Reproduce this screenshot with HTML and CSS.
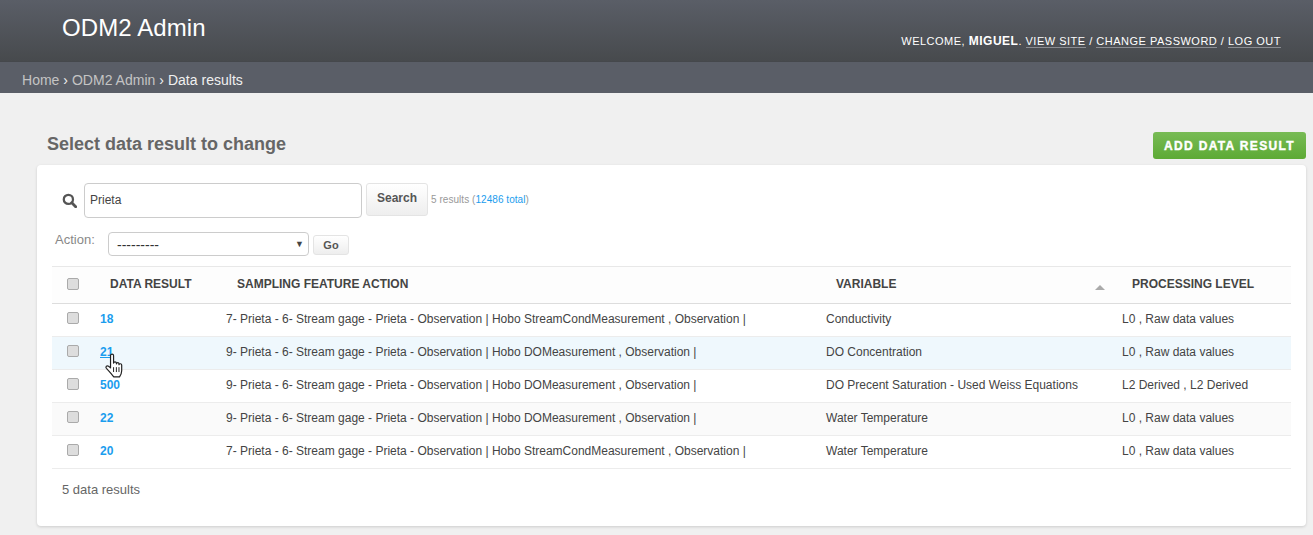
FILE: index.html
```html
<!DOCTYPE html>
<html lang="en">
<head>
  <meta charset="UTF-8">
  <title>Select data result to change</title>
  <link rel="stylesheet" href="styles.css">
</head>
<body>
  <header class="topbar">
    <div class="brand">ODM2 Admin</div>
    <div class="usertools">Welcome, <strong>Miguel</strong>. <a href="#">View site</a> / <a href="#">Change password</a> / <a href="#">Log out</a></div>
  </header>
  <nav class="crumbs"><a href="#">Home</a> › <a href="#">ODM2 Admin</a> › Data results</nav>

  <main class="content">
    <div class="title-row">
      <h1>Select data result to change</h1>
      <a class="add-btn" href="#">Add data result</a>
    </div>

    <section class="card">
      <form class="search-row">
        <svg class="search-icon" viewBox="0 0 16 16" width="15" height="15"><circle cx="6.8" cy="6.8" r="4.9" fill="none" stroke="#555" stroke-width="2.4"/><path d="M10.4 10.4 14.6 14.6" stroke="#555" stroke-width="3" stroke-linecap="round"/></svg>
        <input class="search-input" type="text" value="Prieta">
        <button class="search-btn" type="button">Search</button>
        <span class="count">5 results (<a href="#">12486 total</a>)</span>
      </form>

      <div class="action-row">
        <span class="action-label">Action:</span>
        <div class="select-box">---------<span class="select-arrow">▼</span></div>
        <button class="go-btn" type="button">Go</button>
      </div>

      <div class="table-wrap">
        <table class="results">
          <colgroup>
            <col class="col-check"><col class="col-id"><col class="col-action"><col class="col-var"><col class="col-level">
          </colgroup>
          <thead>
            <tr>
              <th class="check"><span class="box"></span></th>
              <th>Data result</th>
              <th class="th-action">Sampling feature action</th>
              <th class="sorted">Variable<span class="sort-arrow"></span></th>
              <th>Processing level</th>
            </tr>
          </thead>
          <tbody>
            <tr>
              <td class="check"><span class="box"></span></td>
              <td><a class="id" href="#">18</a></td>
              <td>7- Prieta - 6- Stream gage - Prieta - Observation | Hobo StreamCondMeasurement , Observation |</td>
              <td>Conductivity</td>
              <td>L0 , Raw data values</td>
            </tr>
            <tr class="hovered">
              <td class="check"><span class="box"></span></td>
              <td class="id-cell"><a class="id under" href="#">21</a>
                <svg class="hand" viewBox="0 0 18 24" width="20" height="26"><path d="M5.800 3.200c0-1.700 2.800-1.700 2.800 0v7c.2-1.500 2.500-1.500 2.600 0v.7c.2-1.400 2.300-1.400 2.400 0v.8c.2-1.200 2.400-1.100 2.500.3v5.200c0 2.500-1 4.200-2 5.800H8.800c-1.400-2-3.400-4.200-6.800-7.900-1.300-1.500.5-3 2-2l1.800 1.600z" fill="#fff" stroke="#222" stroke-width="1.100" stroke-linejoin="round"/><path d="M8.600 14v4.500M11.200 14v4.500M13.600 14v4.500" stroke="#222" stroke-width=".9"/></svg>
              </td>
              <td>9- Prieta - 6- Stream gage - Prieta - Observation | Hobo DOMeasurement , Observation |</td>
              <td>DO Concentration</td>
              <td>L0 , Raw data values</td>
            </tr>
            <tr>
              <td class="check"><span class="box"></span></td>
              <td><a class="id" href="#">500</a></td>
              <td>9- Prieta - 6- Stream gage - Prieta - Observation | Hobo DOMeasurement , Observation |</td>
              <td>DO Precent Saturation - Used Weiss Equations</td>
              <td>L2 Derived , L2 Derived</td>
            </tr>
            <tr class="alt">
              <td class="check"><span class="box"></span></td>
              <td><a class="id" href="#">22</a></td>
              <td>9- Prieta - 6- Stream gage - Prieta - Observation | Hobo DOMeasurement , Observation |</td>
              <td>Water Temperature</td>
              <td>L0 , Raw data values</td>
            </tr>
            <tr>
              <td class="check"><span class="box"></span></td>
              <td><a class="id" href="#">20</a></td>
              <td>7- Prieta - 6- Stream gage - Prieta - Observation | Hobo StreamCondMeasurement , Observation |</td>
              <td>Water Temperature</td>
              <td>L0 , Raw data values</td>
            </tr>
          </tbody>
        </table>
      </div>

      <p class="paginator">5 data results</p>
    </section>
  </main>
</body>
</html>
```

FILE: styles.css
```css
* { box-sizing: border-box; }
html, body { height: 100%; }
body { margin: 0; background: #f0f0f0; color: #444; font-family: "Liberation Sans", Arial, sans-serif; font-size: 12px; overflow: hidden; }
a { color: #1b9dee; text-decoration: none; }

.topbar { height: 62px; padding: 14px 32px 0 62px; display: flex; justify-content: space-between; background: linear-gradient(#5a5e67, #474a4d); border-bottom: 1px solid #45484c; }
.brand { color: #fff; font-size: 24px; line-height: 28px; letter-spacing: 0.1px; }
.usertools { margin-top: 20px; color: #fff; font-size: 11px; line-height: 14px; letter-spacing: 0.5px; text-transform: uppercase; }
.usertools strong { font-size: 12px; }
.usertools a { color: #fff; border-bottom: 1px solid #8a8d92; }

.crumbs { height: 31px; padding: 10px 22px 0; background: #5a5e67; color: #f0f0f0; font-size: 14px; line-height: 16px; letter-spacing: 0.02px; }
.crumbs a { color: #c4c4c4; }

.content { padding: 39px 7px 0 37px; }
.title-row { height: 33px; display: flex; justify-content: space-between; align-items: flex-start; }
.title-row h1 { margin: 1px 0 0 10px; color: #666; font-size: 18px; line-height: 22px; font-weight: bold; }
.add-btn { width: 153px; height: 27px; background: linear-gradient(#78bb55, #5daa35); border-radius: 3px; color: #fff; font-size: 12px; font-weight: bold; line-height: 28px; letter-spacing: 1.35px; text-align: center; text-transform: uppercase; -webkit-text-stroke: 0.4px #fff; }

.card { height: 361px; padding: 18px 15px 0; background: #fff; border-radius: 4px; box-shadow: 0 1px 3px rgba(0,0,0,0.15); }
.search-row { display: flex; align-items: flex-start; height: 35px; padding-left: 10px; }
.search-icon { margin: 10px 7px 0 0; }
.search-input { width: 278px; height: 35px; padding: 0 5px 2px; border: 1px solid #ccc; border-radius: 4px; color: #444; font: 12px "Liberation Sans", Arial, sans-serif; }
.search-btn { width: 62px; height: 33px; margin-left: 4px; background: linear-gradient(#fff, #eee); border: 1px solid #e4e4e4; border-radius: 3px; color: #555; font: bold 12px "Liberation Sans", Arial, sans-serif; padding-bottom: 4px; }
.count { margin: 11px 0 0 3px; color: #999; font-size: 10px; line-height: 12px; letter-spacing: 0.05px; }

.action-row { display: flex; align-items: flex-start; height: 34px; margin-top: 14px; padding-left: 3px; }
.action-label { width: 53px; color: #888; font-size: 13px; line-height: 16px; }
.select-box { position: relative; width: 201px; height: 24px; padding-left: 8px; border: 1px solid #ccc; border-radius: 4px; color: #333; font-size: 14px; line-height: 24px; }
.select-arrow { position: absolute; right: 4px; top: -1px; font-size: 9px; color: #444; }
.go-btn { width: 36px; height: 20px; margin: 3px 0 0 4px; padding: 0; background: linear-gradient(#fff, #eee); border: 1px solid #e4e4e4; border-radius: 3px; color: #555; font: bold 11px "Liberation Sans", Arial, sans-serif; }

.results { width: 1239px; table-layout: fixed; border-collapse: collapse; }
.col-check { width: 38px; }
.col-id { width: 126px; }
.col-action { width: 600px; }
.col-var { width: 296px; }
.col-level { width: 179px; }
.results th { height: 37px; padding: 0 0 2px 20px; background: #fdfdfd; border-top: 1px solid #e8e8e8; border-bottom: 1px solid #ddd; color: #444; font-size: 12px; font-weight: bold; text-align: left; text-transform: uppercase; }
.results th.th-action { padding-left: 21px; }
.results td { height: 33px; padding: 0 0 2px 10px; border-bottom: 1px solid #ececec; color: #444; font-size: 12px; }
.results th.check { padding: 0 0 2px 15px; }
.results td.check { padding: 0 0 4px 15px; }
.results .alt td { background: #fafafa; }
.results .hovered td { background: #eff8fd; }
.box { display: block; width: 12px; height: 12px; background: #ddd; border: 1px solid #aaa; border-radius: 2px; }
.id { color: #1b9dee; font-weight: bold; }
.id.under { text-decoration: underline; }
.id-cell { position: relative; }
.hand { position: absolute; left: 14px; top: 15px; }
.sorted { position: relative; }
.sort-arrow { position: absolute; right: 7px; top: 18px; width: 0; height: 0; border-left: 5px solid transparent; border-right: 5px solid transparent; border-bottom: 5px solid #aaa; }

.paginator { margin: 14px 0 0 10px; color: #666; font-size: 13px; line-height: 14px; }
```
